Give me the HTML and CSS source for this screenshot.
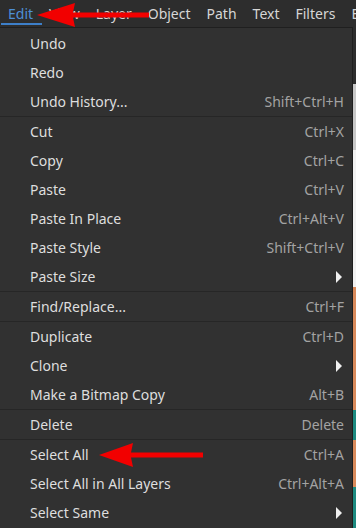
FILE: index.html
```html
<!DOCTYPE html>
<html>
<head>
<meta charset="utf-8">
<link rel="stylesheet" href="styles.css">
</head>
<body>
<div class="app">
  <div class="menubar">
    <span class="mb-item active">Edit</span>
    <span class="mb-item">View</span>
    <span class="mb-item">Layer</span>
    <span class="mb-item">Object</span>
    <span class="mb-item">Path</span>
    <span class="mb-item">Text</span>
    <span class="mb-item">Filters</span>
    <span class="mb-item">Extensions</span>
  </div>
  <div class="body">
    <div class="menu">
      <div class="item first"><span>Undo</span><span class="sc"></span></div>
      <div class="item"><span>Redo</span><span class="sc"></span></div>
      <div class="item"><span>Undo History...</span><span class="sc">Shift+Ctrl+H</span></div>
      <div class="sep"></div>
      <div class="item"><span>Cut</span><span class="sc">Ctrl+X</span></div>
      <div class="item"><span>Copy</span><span class="sc">Ctrl+C</span></div>
      <div class="item"><span>Paste</span><span class="sc">Ctrl+V</span></div>
      <div class="item"><span>Paste In Place</span><span class="sc">Ctrl+Alt+V</span></div>
      <div class="item"><span>Paste Style</span><span class="sc">Shift+Ctrl+V</span></div>
      <div class="item"><span>Paste Size</span><span class="arrow"></span></div>
      <div class="sep"></div>
      <div class="item"><span>Find/Replace...</span><span class="sc">Ctrl+F</span></div>
      <div class="sep"></div>
      <div class="item"><span>Duplicate</span><span class="sc">Ctrl+D</span></div>
      <div class="item"><span>Clone</span><span class="arrow"></span></div>
      <div class="item"><span>Make a Bitmap Copy</span><span class="sc">Alt+B</span></div>
      <div class="sep"></div>
      <div class="item"><span>Delete</span><span class="sc">Delete</span></div>
      <div class="sep"></div>
      <div class="item"><span>Select All</span><span class="sc">Ctrl+A</span></div>
      <div class="item"><span>Select All in All Layers</span><span class="sc">Ctrl+Alt+A</span></div>
      <div class="item"><span>Select Same</span><span class="arrow"></span></div>
    </div>
    <div class="strip">
      <div class="s-dark"></div>
      <div class="s-light"></div>
      <div class="s-white"></div>
      <div class="s-orange1"></div>
      <div class="s-teal1"></div>
      <div class="s-orange2"></div>
      <div class="s-teal2"></div>
    </div>
  </div>
  <svg class="red-arrow top" width="112" height="24" viewBox="0 0 112 24">
    <polygon points="0,12 38,0 36,9.5 112,9.5 112,14.5 36,14.5 38,24" fill="#f20000"/>
  </svg>
  <svg class="red-arrow bottom" width="104" height="24" viewBox="0 0 104 24">
    <polygon points="0,12 34,0 32,9.5 104,9.5 104,14.5 32,14.5 34,24" fill="#f20000"/>
  </svg>
</div>
</body>
</html>
```
FILE: styles.css
```css
* { box-sizing: border-box; }
html, body {
  margin: 0;
  padding: 0;
  background: #2d2d2d;
  width: 356px;
  height: 528px;
  overflow: hidden;
}
.app {
  position: relative;
  width: 356px;
  height: 528px;
  display: flex;
  flex-direction: column;
  font-family: "Noto Sans", "Open Sans", sans-serif;
  font-size: 14px;
}
.menubar {
  height: 27px;
  flex: none;
  display: flex;
  align-items: center;
  padding-left: 0;
  background: #2d2d2d;
  white-space: nowrap;
  color: #d6d6d6;
  overflow: hidden;
}
.mb-item {
  padding: 0 8px;
  height: 27px;
  line-height: 27px;
  position: relative;
  flex: none;
}
.mb-item.active {
  color: #4d8fd6;
}
.mb-item.active::after {
  content: "";
  position: absolute;
  left: 1px;
  right: -1px;
  bottom: 2px;
  height: 2px;
  background: #3d7fc9;
}
.body {
  flex: 1;
  display: flex;
  min-height: 0;
}
.menu {
  width: 353px;
  flex: none;
  background: #313131;
  border-top: 1px solid #1f1f1f;
  border-right: 1px solid #1f1f1f;
  padding-top: 1px;
  display: flex;
  flex-direction: column;
}
.item {
  height: 29px;
  flex: none;
  display: flex;
  align-items: center;
  justify-content: space-between;
  padding: 0 8px 0 30px;
  color: #dedede;
  white-space: nowrap;
}
.sc {
  color: #a3a3a3;
}
.arrow {
  width: 0;
  height: 0;
  border-top: 6px solid transparent;
  border-bottom: 6px solid transparent;
  border-left: 6px solid #f0f0f0;
  margin-right: 2px;
}
.sep {
  height: 1px;
  flex: none;
  background: #262626;
}
.strip {
  flex: 1;
  display: flex;
  flex-direction: column;
}
.s-dark { height: 57px; background: #2d2d2d; }
.s-light { height: 66px; background: #c8c8c8; }
.s-white { height: 137px; background: #f2f2f2; }
.s-orange1 { height: 123px; background: #d98a5b; }
.s-teal1 { height: 30px; background: #1d8a80; }
.s-orange2 { height: 47px; background: #d98a5b; }
.s-teal2 { flex: 1; background: #1d8a80; }
.red-arrow {
  position: absolute;
}
.red-arrow.top { left: 37px; top: 3px; }
.red-arrow.bottom { left: 99px; top: 443px; }
```
